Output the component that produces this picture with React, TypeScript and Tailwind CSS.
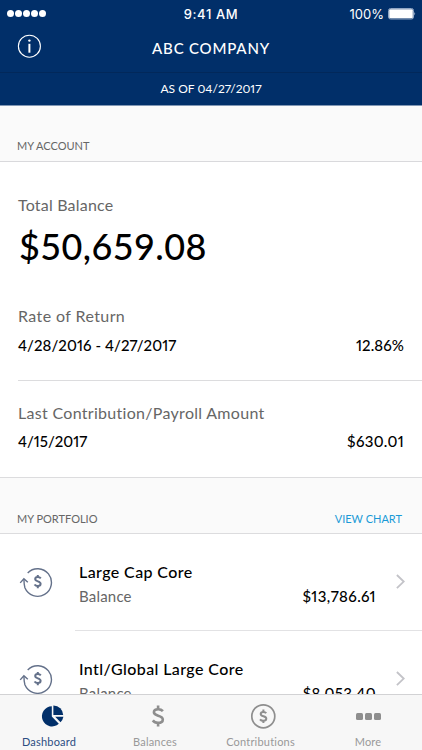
import { ReactNode } from 'react';

interface Holding {
  name: string;
  balance: string;
}

const holdings: Holding[] = [
  { name: 'Large Cap Core', balance: '$13,786.61' },
  { name: 'Intl/Global Large Core', balance: '$8,053.40' },
];

function DollarSign({ className }: { className?: string }) {
  return (
    <svg viewBox="0 0 14 24" className={className} fill="none" stroke="currentColor">
      <path d="M11.9 7.2C10.8 5.9 9.2 5.2 7.2 5.2C4.6 5.2 2.9 6.4 2.9 8.3C2.9 12.6 11.8 10.7 11.8 15.4C11.8 17.5 9.9 18.8 7 18.8C4.8 18.8 3 18 1.8 16.4" />
      <path d="M7.1 1.5V5.2M7.1 18.8V22.5" />
    </svg>
  );
}

function InfoIcon() {
  return (
    <svg viewBox="0 0 24 24" className="h-6 w-6" fill="none" stroke="white">
      <circle cx="12.4" cy="12.2" r="11" strokeWidth="1.1" />
      <path d="M12.4 9.8V18.7" strokeWidth="2" />
      <circle cx="12.4" cy="6.6" r="1.2" fill="white" stroke="none" />
    </svg>
  );
}

function RebalanceIcon() {
  return (
    <svg viewBox="0 0 34 32" className="h-8 w-[34px]" fill="none" stroke="#64718a" strokeWidth="1.4">
      <path d="M8.7 6.9A13.8 13.8 0 1 1 5.9 21.8C5.2 19.3 4.9 16.3 5 13.1" />
      <path d="M1.2 16.9L4.9 12.7L8.8 16.2" />
      <g strokeWidth="2">
        <path d="M21.8 12.4C21.1 11.5 20 11.1 18.8 11.1C17.2 11.1 16.2 11.9 16.2 13.1C16.2 16 21.6 14.7 21.6 17.8C21.6 19.2 20.5 20 18.7 20C17.4 20 16.3 19.5 15.5 18.5" />
        <path d="M18.8 8.9V11.1M18.8 20V22.3" />
      </g>
    </svg>
  );
}

function ChevronIcon() {
  return (
    <svg viewBox="0 0 10 16" className="h-4 w-2.5" fill="none" stroke="#c3c3c8" strokeWidth="1.8">
      <path d="M0.9 1L7.7 7.6L0.9 14.2" />
    </svg>
  );
}

function PieIcon() {
  return (
    <svg viewBox="0 0 24 24" className="h-6 w-6" fill="#012f69">
      <path d="M10.8 2.2V12.4L17.8 19.8A10.1 10.1 0 1 1 10.8 2.2Z" />
      <path d="M12.4 1.5A9.7 9.7 0 0 1 22.2 11H12.4Z" />
      <path d="M14.2 12.7H22.4A9.8 9.8 0 0 1 19.5 18.2Z" />
    </svg>
  );
}

function CircleDollarIcon() {
  return (
    <svg viewBox="0 0 26 26" className="h-[26px] w-[26px]" fill="none" stroke="#8e8e8e">
      <circle cx="13.3" cy="13.3" r="11.5" strokeWidth="1.7" />
      <g strokeWidth="2">
        <path d="M16.3 10.1C15.6 9.3 14.6 8.9 13.4 8.9C11.7 8.9 10.7 9.7 10.7 10.9C10.7 13.9 16.3 12.5 16.3 15.6C16.3 17 15.2 17.8 13.3 17.8C11.9 17.8 10.8 17.3 10 16.3" />
        <path d="M13.4 6.6V8.9M13.4 17.8V20.1" />
      </g>
    </svg>
  );
}

function MoreIcon() {
  return (
    <div className="flex gap-0.5">
      <span className="h-[7px] w-[7px] rounded-[1.5px] bg-[#8e8e8e]" />
      <span className="h-[7px] w-[7px] rounded-[1.5px] bg-[#8e8e8e]" />
      <span className="h-[7px] w-[7px] rounded-[1.5px] bg-[#8e8e8e]" />
    </div>
  );
}

function StatusBar() {
  return (
    <div className="grid h-7 grid-cols-3 items-center px-[7px] pt-px font-[Inter,sans-serif]">
      <div className="-mt-0.5 flex gap-[1.5px]">
        {[0, 1, 2, 3, 4].map((dot) => (
          <span key={dot} className="h-[6.5px] w-[6.5px] rounded-full bg-white" />
        ))}
      </div>
      <span className="text-center text-[13px] font-medium tracking-[0.6px]">9:41 AM</span>
      <div className="flex items-center justify-end gap-1">
        <span className="text-[13px]">100%</span>
        <svg viewBox="0 0 28 12" className="-mt-0.5 -mr-px h-3 w-7">
          <rect x="0.5" y="0.5" width="25" height="10.5" rx="2" fill="none" stroke="#8fa5c3" />
          <rect x="1.2" y="1.3" width="23.6" height="8.9" rx="1" fill="white" />
          <path d="M26.4 4Q28 5.8 26.4 7.6Z" fill="#c4d0e0" />
        </svg>
      </div>
    </div>
  );
}

function HoldingRow({ holding }: { holding: Holding }) {
  return (
    <div className="flex h-24 shrink-0 items-start pl-[19px]">
      <div className="mt-8 w-[60px]">
        <RebalanceIcon />
      </div>
      <div className="mt-[26px] flex-1">
        <div className="text-base leading-6 font-medium tracking-[0.4px] text-black">{holding.name}</div>
        <div className="flex items-center justify-between leading-[25px]">
          <span className="text-[15px] tracking-[0.2px] text-[#666]">Balance</span>
          <span className="text-[15px] font-medium tracking-[0.4px] text-black proportional-nums">
            {holding.balance}
          </span>
        </div>
      </div>
      <div className="mt-10 mr-4 ml-5">
        <ChevronIcon />
      </div>
    </div>
  );
}

interface TabProps {
  label: string;
  labelClass: string;
  active?: boolean;
  children: ReactNode;
}

function Tab({ label, labelClass, active, children }: TabProps) {
  return (
    <div className={`flex flex-col items-center ${active ? 'text-[#2c4d82]' : 'text-[#999]'}`}>
      <div className="flex h-[42px] items-center">{children}</div>
      <span className={`-mt-px text-[11px] leading-3 tracking-[0.2px] ${labelClass}`}>{label}</span>
    </div>
  );
}

export default function App() {
  return (
    <div className="flex h-[750px] w-[422px] flex-col overflow-hidden bg-white font-[Lato,sans-serif]">
      <header className="h-[106px] shrink-0 border-b border-[#8197b4] bg-[#012f69] text-white">
        <StatusBar />
        <div className="grid h-[45px] grid-cols-[1fr_auto_1fr] items-center border-b border-[#02285a]">
          <div className="-mt-2 pl-[17px]">
            <InfoIcon />
          </div>
          <h1 className="-mt-1 text-[15px] font-medium tracking-[0.8px]">ABC COMPANY</h1>
        </div>
        <div className="text-center text-xs leading-8 proportional-nums">AS OF 04/27/2017</div>
      </header>

      <div className="h-14 shrink-0 border-b border-[#d9d9dc] bg-[#fafafa] pt-8 pl-[17px] text-[11px] leading-4 text-[#666]">
        MY ACCOUNT
      </div>

      <section className="h-[315px] shrink-0 pl-[18px]">
        <div className="pt-[31px] text-base leading-6 tracking-[0.2px] text-[#666]">Total Balance</div>
        <div className="mt-[5px] pl-px text-[36px] leading-[48px] font-medium tracking-[0.4px] text-black">
          $50,659.08
        </div>
        <div className="mt-[34px] border-b border-[#dcdcde] pr-[18px] pb-[23px]">
          <div className="text-base leading-6 tracking-[0.4px] text-[#666]">Rate of Return</div>
          <div className="mt-[5px] flex justify-between text-[15px] leading-6 font-medium tracking-[0.08px] text-black proportional-nums">
            <span>4/28/2016 - 4/27/2017</span>
            <span>12.86%</span>
          </div>
        </div>
        <div className="pt-5 pr-[18px]">
          <div className="text-base leading-6 tracking-[0.3px] text-[#666]">Last Contribution/Payroll Amount</div>
          <div className="mt-1 flex justify-between text-[15px] leading-6 font-medium text-black proportional-nums">
            <span>4/15/2017</span>
            <span className="tracking-[0.3px]">$630.01</span>
          </div>
        </div>
      </section>

      <div className="flex h-[57px] shrink-0 justify-between border-y border-[#dcdcde] bg-[#fafafa] pt-[33px] pr-5 pl-[17px] text-[11px] leading-4">
        <span className="text-[#666]">MY PORTFOLIO</span>
        <a className="text-[#1a9ad7]">VIEW CHART</a>
      </div>

      <section className="flex min-h-0 flex-1 flex-col overflow-hidden">
        <HoldingRow holding={holdings[0]} />
        <div className="ml-[75px] h-px shrink-0 bg-[#e2e2e4]" />
        <HoldingRow holding={holdings[1]} />
      </section>

      <nav className="grid h-14 shrink-0 grid-cols-4 border-t border-[#d2d2d4] bg-[#f7f7f7] pr-0.5">
        <Tab label="Dashboard" labelClass="mr-[7px]" active>
          <PieIcon />
        </Tab>
        <Tab label="Balances" labelClass="mr-[5px]">
          <DollarSign className="h-6 w-3.5 stroke-[2.6] text-[#8e8e8e]" />
        </Tab>
        <Tab label="Contributions" labelClass="mr-1">
          <CircleDollarIcon />
        </Tab>
        <Tab label="More" labelClass="ml-px">
          <div className="ml-0.5">
            <MoreIcon />
          </div>
        </Tab>
      </nav>
    </div>
  );
}
